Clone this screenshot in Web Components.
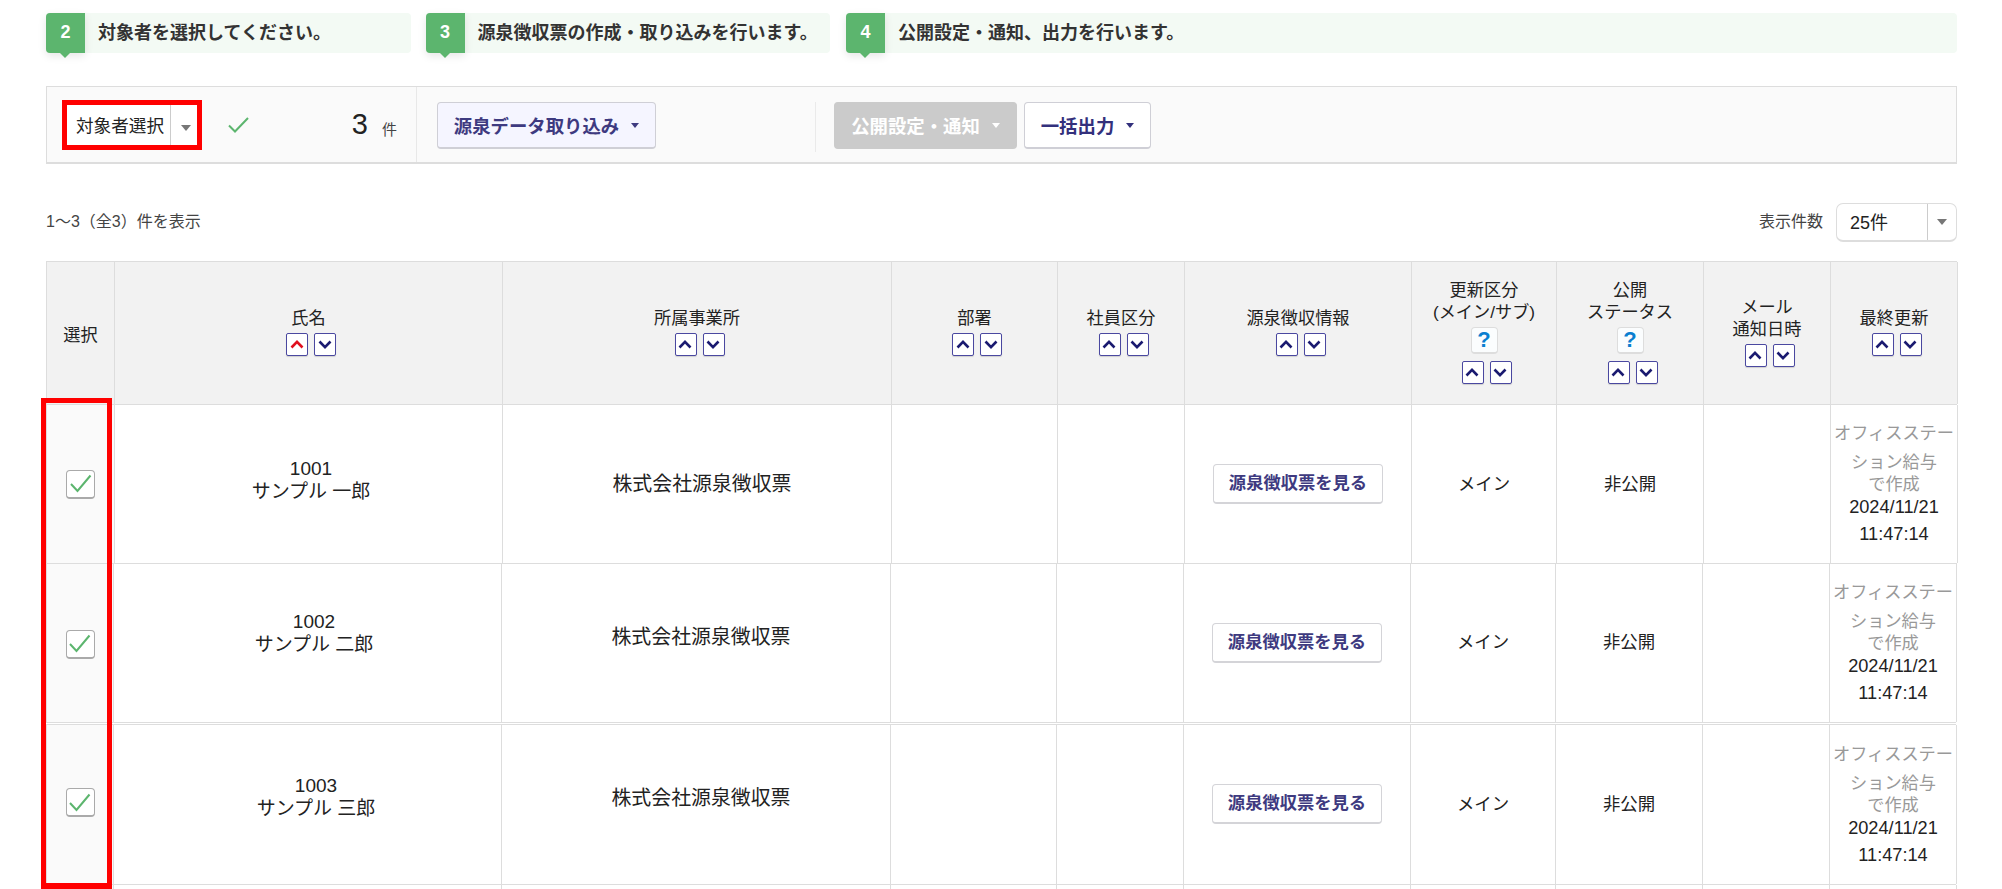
<!DOCTYPE html>
<html lang="ja">
<head>
<meta charset="utf-8">
<title>源泉徴収票</title>
<style>
html,body{margin:0;padding:0;height:889px;overflow:hidden;background:#fff;}
body{font-family:"Liberation Sans","Noto Sans CJK JP",sans-serif;color:#222;}
</style>
</head>
<body>
<payroll-page></payroll-page>
<script>
function def(name, css, html){
  const t=document.createElement('template');
  t.innerHTML='<style>'+css+'</style>'+html;
  customElements.define(name,class extends HTMLElement{
    constructor(){super();this.attachShadow({mode:'open'}).appendChild(t.content.cloneNode(true));}
  });
}

def('step-banner',`
:host{display:flex;align-items:center;height:40px;background:#f3faf4;border-radius:4px;flex:0 0 auto;font-size:18px;font-weight:bold;color:#333;}
.tab{position:relative;box-sizing:border-box;padding-bottom:2px;width:39px;height:40px;background:#5cb56e;color:#fff;border-radius:4px 0 0 4px;display:flex;align-items:center;justify-content:center;font-size:18px;box-shadow:0 3px 8px rgba(0,0,0,.1);margin-right:13px;}
.tab::after{content:"";position:absolute;left:14px;top:40px;border:5px solid transparent;border-bottom:0;border-top-color:#5cb56e;}
.t{padding-bottom:4px;}
`,`<div class="tab"><slot name="num"></slot></div><div class="t"><slot></slot></div>`);

def('caret-mark',`
:host{display:inline-block;width:0;height:0;border-left:var(--cw,4.5px) solid transparent;border-right:var(--cw,4.5px) solid transparent;border-top:var(--ch,5px) solid currentColor;}
`,``);

def('tool-button',`
:host{display:inline-flex;box-sizing:border-box;align-items:center;justify-content:center;height:47px;border:1px solid #cfcfd6;border-bottom-width:2px;border-radius:4px;background:#fff;color:#33307c;font-size:18.4px;font-weight:bold;gap:12px;}
:host([kind=soft]){background:#f5f5ff;color:#3e3a80;}
:host([kind=off]){background:#cbcbcb;border-color:#cbcbcb;color:#fff;}
`,`<slot></slot><caret-mark></caret-mark>`);

def('target-select',`
:host{display:flex;box-sizing:border-box;width:140px;height:50px;border:5px solid #f00;background:#fff;font-size:17.6px;color:#222;align-items:stretch;}
.t{width:104px;box-sizing:border-box;padding-left:9px;display:flex;align-items:center;border-right:1px solid #ccc;}
.a{flex:1;display:flex;align-items:center;justify-content:center;color:#777;padding:6px 0 0 3px;--cw:5.5px;--ch:6px;}
`,`<div class="t"><slot></slot></div><div class="a"><caret-mark></caret-mark></div>`);

def('count-select',`
:host{display:flex;box-sizing:border-box;width:121px;height:39px;border:1px solid #ddd;border-bottom-width:2px;border-radius:7px;background:#fff;font-size:18px;color:#222;}
.t{width:91px;box-sizing:border-box;padding:0 0 3px 13px;display:flex;align-items:center;border-right:1px solid #ccc;}
.a{flex:1;display:flex;align-items:center;justify-content:center;color:#777;--cw:5.5px;--ch:6px;}
`,`<div class="t"><slot></slot></div><div class="a"><caret-mark></caret-mark></div>`);

def('check-mark',`
:host{display:inline-block;width:21px;height:16px;color:#5cb56e;}
svg{display:block;}
`,`<svg width="21" height="16" viewBox="0 0 21 16"><path d="M1 8.5 L7 14.5 L20 1" fill="none" stroke="#5cb56e" stroke-width="2"/></svg>`);

def('check-box',`
:host{display:block;box-sizing:border-box;width:29px;height:29px;border:1.5px solid #aaa;border-bottom-width:2px;border-radius:4px;background:#fff;}
svg{display:block;margin:-1.5px;}
`,`<svg width="29" height="29" viewBox="0 0 29 29"><path d="M5 15 L11.5 22 L24.5 6.5" fill="none" stroke="#5cb56e" stroke-width="2"/></svg>`);

def('sort-arrows',`
:host{display:flex;gap:6px;justify-content:center;margin-left:5px;}
.b{box-sizing:border-box;width:22px;height:23px;border:1.5px solid #4a48a0;border-radius:2px;background:#fff;box-shadow:0 1px 1px rgba(0,0,0,.15);}
svg{display:block;margin:-1.5px;}
`,`<div class="b"><svg width="22" height="23" viewBox="0 0 22 23"><path d="M5.5 14.5 L11 8.8 L16.5 14.5" fill="none" stroke="var(--up,#1a1a70)" stroke-width="2.6"/></svg></div><div class="b"><svg width="22" height="23" viewBox="0 0 22 23"><path d="M5.5 8.5 L11 14.2 L16.5 8.5" fill="none" stroke="#1a1a70" stroke-width="2.6"/></svg></div>`);

def('help-icon',`
:host{display:flex;box-sizing:border-box;width:27px;height:27px;margin:4px 0 3px;border:1px solid #ddd;border-bottom-width:2px;border-radius:4px;background:#fbfdfe;color:#0a7fd0;font-size:22px;font-weight:bold;align-items:center;justify-content:center;font-family:"Liberation Sans",sans-serif;}
`,`<slot></slot>`);

def('head-cell',`
:host{display:flex;flex-direction:column;align-items:center;justify-content:center;box-sizing:border-box;border-left:1px solid #ddd;font-size:17.2px;line-height:22px;text-align:center;background:#f2f2f2;color:#222;padding:var(--pt,0) 0 3px;}
:host(:last-child){border-right:1px solid #ddd;}
.s{margin-top:4px;}
`,`<slot></slot><div class="s"><slot name="sort"></slot></div>`);

def('grid-row',`
:host{display:grid;grid-template-columns:var(--c1,68px) 388px 389px 166px 127px 227px 145px 147px 127px 128px;height:var(--h,159px);box-sizing:border-box;border-bottom:1px solid #ddd;border-top:var(--bt,0) solid #ddd;margin:var(--mt,0) var(--mr,0) 0 0;background:#fff;}
`,`<slot></slot>`);

def('body-cell',`
:host{display:flex;flex-direction:column;align-items:center;justify-content:center;box-sizing:border-box;border-left:1px solid #ddd;padding:2px 0 var(--pb,0) var(--pl,0);font-size:var(--fs,17.4px);line-height:var(--lh,23px);text-align:center;color:#222;white-space:nowrap;min-width:0;}
:host(:last-child){border-right:1px solid #ddd;}
:host([kind=pick]){background:#fafafa;}
`,`<slot></slot>`);

def('view-button',`
:host{display:flex;box-sizing:border-box;width:170px;height:40px;align-items:center;justify-content:center;border:1px solid #d4d4d8;border-bottom-width:2px;border-radius:4px;background:#fff;color:#3e3a80;font-size:17.3px;font-weight:bold;}
`,`<slot></slot>`);

def('update-note',`
:host{display:block;text-align:center;white-space:nowrap;font-size:17.2px;}
.m{color:#999;}
.a{line-height:30px;height:30px;}
.b{line-height:28px;height:28px;}
.c{line-height:16px;height:16px;}
.d,.e{line-height:30px;height:30px;color:#222;font-size:18.2px;}
.d{height:27.4px;}
`,`<div class="m a"><slot name="a"></slot></div><div class="m b"><slot name="b"></slot></div><div class="m c"><slot name="c"></slot></div><div class="d"><slot name="d"></slot></div><div class="e"><slot name="e"></slot></div>`);

const row=(v)=>`
<grid-row style="${v.rs||''}">
  <body-cell kind="pick" style="--pb:${v.cb}px"><check-box></check-box></body-cell>
  <body-cell style="--pb:${v.nb}px;--pl:${v.nl}px;--fs:19px"><div>${v.id}</div><div>${v.n}</div></body-cell>
  <body-cell style="--pb:${v.ob}px;--pl:10px;--fs:19.9px">株式会社源泉徴収票</body-cell>
  <body-cell></body-cell>
  <body-cell></body-cell>
  <body-cell style="--pb:${v.vb}px"><view-button>源泉徴収票を見る</view-button></body-cell>
  <body-cell style="--pb:${v.mb}px">メイン</body-cell>
  <body-cell style="--pb:${v.mb}px">非公開</body-cell>
  <body-cell></body-cell>
  <body-cell style="--pb:2.6px"><update-note><span slot="a">オフィスステー</span><span slot="b">ション給与</span><span slot="c">で作成</span><span slot="d">2024/11/21</span><span slot="e">11:47:14</span></update-note></body-cell>
</grid-row>`;

const sort='<sort-arrows slot="sort"></sort-arrows>';

def('payroll-page',`
:host{display:block;padding:13px 45px 0 46px;}
.steps{display:flex;}
.tools{display:flex;box-sizing:border-box;height:78px;margin-top:33px;border:1px solid #ddd;border-bottom-width:2px;background:#fafafa;}
.s1{display:flex;align-items:center;box-sizing:border-box;width:370px;padding:0 19px 0 15px;border-right:1px solid #e8e8e8;}
.s2{display:flex;align-items:flex-start;box-sizing:border-box;width:398px;padding:15px 0 0 20px;}
.s3{display:flex;align-items:flex-start;gap:7px;margin-top:15px;height:50px;border-left:1px solid #eaeaea;padding-left:18px;}
check-mark{margin:0 0 0 26px;}
.num{margin-left:auto;font-size:29px;color:#222;}
.unit{margin:8px 0 0 14px;font-size:15px;color:#444;}
.meta{display:flex;align-items:center;height:39px;margin-top:39px;font-size:16px;color:#444;}
.meta span{padding-bottom:5px;}
.meta span:first-child{flex:1;}
.meta span+span{margin-right:13px;}
.table{position:relative;margin-top:19px;border-top:1px solid #ddd;}
.mark{position:absolute;left:-5px;top:136px;width:71px;height:491px;box-sizing:border-box;border:5px solid #f00;border-bottom-width:6px;}
`,`
<div class="steps">
  <step-banner style="width:365px;margin-right:14.5px"><span slot="num">2</span>対象者を選択してください。</step-banner>
  <step-banner style="width:404.5px;margin-right:16px"><span slot="num">3</span>源泉徴収票の作成・取り込みを行います。</step-banner>
  <step-banner style="flex:1"><span slot="num">4</span>公開設定・通知、出力を行います。</step-banner>
</div>
<div class="tools">
  <div class="s1">
    <target-select>対象者選択</target-select>
    <check-mark></check-mark>
    <span class="num">3</span><span class="unit">件</span>
  </div>
  <div class="s2"><tool-button kind="soft" style="width:219px">源泉データ取り込み</tool-button></div>
  <div class="s3">
    <tool-button kind="off" style="width:183px">公開設定・通知</tool-button>
    <tool-button style="width:127px">一括出力</tool-button>
  </div>
</div>
<div class="meta"><span>1〜3（全3）件を表示</span><span>表示件数</span><count-select>25件</count-select></div>
<div class="table">
  <grid-row style="--h:143px">
    <head-cell style="--pt:10px">選択</head-cell>
    <head-cell>氏名<sort-arrows slot="sort" style="--up:#e0101e"></sort-arrows></head-cell>
    <head-cell>所属事業所${sort}</head-cell>
    <head-cell>部署${sort}</head-cell>
    <head-cell>社員区分${sort}</head-cell>
    <head-cell>源泉徴収情報${sort}</head-cell>
    <head-cell>更新区分<br>(メイン/サブ)<help-icon>?</help-icon>${sort}</head-cell>
    <head-cell>公開<br>ステータス<help-icon>?</help-icon>${sort}</head-cell>
    <head-cell>メール<br>通知日時${sort}</head-cell>
    <head-cell>最終更新${sort}</head-cell>
  </grid-row>
  ${row({id:'1001',n:'サンプル 一郎',cb:2,nb:10,nl:5,ob:1,vb:2,mb:1,rs:''})}
  ${row({id:'1002',n:'サンプル 二郎',cb:0,nb:23,nl:13,ob:14,vb:3,mb:4,rs:'--c1:67px;--mr:1px;--h:159px'})}
  ${row({id:'1003',n:'サンプル 三郎',cb:6,nb:17,nl:17,ob:15,vb:3,mb:3,rs:'--c1:67px;--mr:1px;--h:161px;--bt:1px;--mt:1px'})}
  <grid-row style="--c1:67px;--mr:1px;--h:20px">
    <body-cell kind="pick"></body-cell><body-cell></body-cell><body-cell></body-cell><body-cell></body-cell><body-cell></body-cell><body-cell></body-cell><body-cell></body-cell><body-cell></body-cell><body-cell></body-cell><body-cell></body-cell>
  </grid-row>
  <div class="mark"></div>
</div>
`);
</script>
</body>
</html>
